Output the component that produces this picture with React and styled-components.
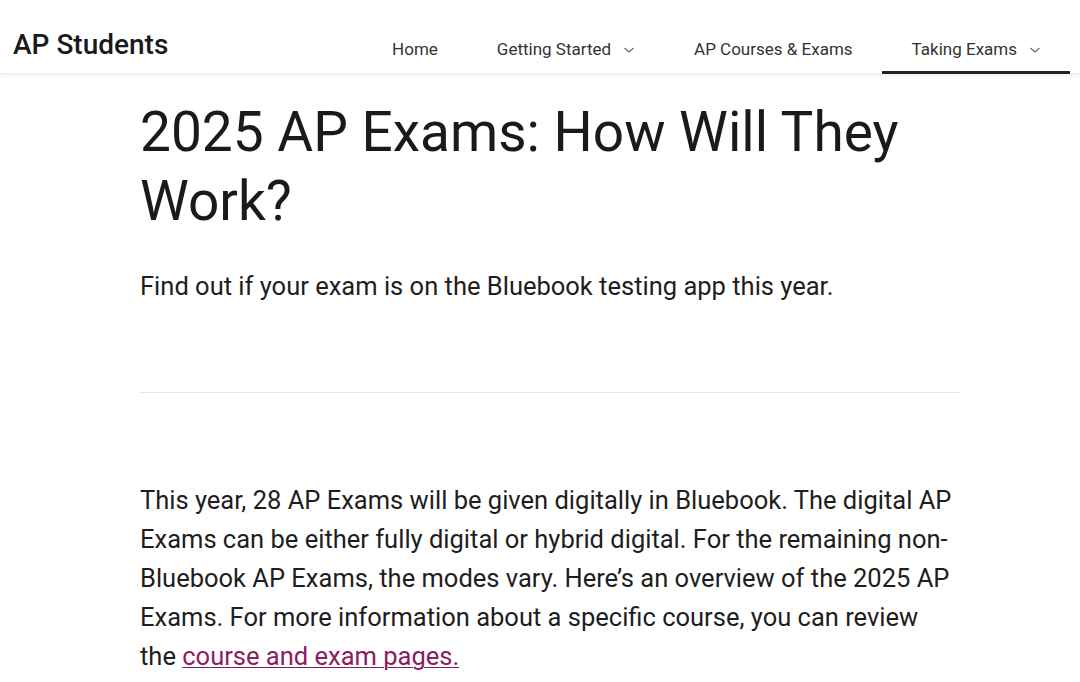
import styled, { createGlobalStyle } from "styled-components";

const GlobalStyle = createGlobalStyle`
  * { box-sizing: border-box; }
  body {
    margin: 0;
    background: #ffffff;
    font-family: Roboto, "Liberation Sans", Arial, sans-serif;
    color: #1e1e1e;
  }
`;

const Chevron = () => (
  <ChevronIcon viewBox="0 0 12 8" aria-hidden="true">
    <path d="M1.5 2l4.5 4 4.5-4" fill="none" stroke="#666" strokeWidth="1.1" />
  </ChevronIcon>
);

const App = () => {
  return (
    <>
      <GlobalStyle />
      <Header>
        <Brand>AP Students</Brand>
        <Nav>
          <NavItem>Home</NavItem>
          <NavItem>
            Getting Started <Chevron />
          </NavItem>
          <NavItem>AP Courses &amp; Exams</NavItem>
          <NavItem active>
            Taking Exams <Chevron />
          </NavItem>
        </Nav>
      </Header>
      <Main>
        <Title>2025 AP Exams: How Will They Work?</Title>
        <Lead>Find out if your exam is on the Bluebook testing app this year.</Lead>
        <Divider />
        <Body>
          This year, 28 AP Exams will be given digitally in Bluebook. The digital AP
          Exams can be either fully digital or hybrid digital. For the remaining non-Bluebook
          AP Exams, the modes vary. Here’s an overview of the 2025 AP Exams. For more
          information about a specific course, you can review the{" "}
          <Link href="#">course and exam pages.</Link>
        </Body>
      </Main>
    </>
  );
};

const Header = styled.header`
  height: 74px;
  display: flex;
  align-items: stretch;
  justify-content: space-between;
  padding: 0 10px 0 13px;
  background: #fff;
  box-shadow: 0 2px 4px rgba(0, 0, 0, 0.06);
  border-bottom: 1px solid #f0f0f0;
`;

const Brand = styled.div`
  font-size: 28px;
  font-weight: 500;
  color: #1a1a1a;
  align-self: center;
  margin-top: 16px;
`;

const Nav = styled.nav`
  display: flex;
  align-items: stretch;
`;

const NavItem = styled.a`
  display: flex;
  align-items: center;
  gap: 12px;
  padding: 26px 29px 0 30px;
  font-size: 17px;
  color: #333;
  border-bottom: 3px solid ${(p) => (p.active ? "#222" : "transparent")};
  margin-bottom: -1px;
  cursor: pointer;
  white-space: nowrap;
`;

const ChevronIcon = styled.svg`
  width: 12px;
  height: 8px;
  margin-top: 2px;
`;

const Main = styled.main`
  padding: 24px 120px 0 140px;
`;

const Title = styled.h1`
  margin: 0;
  font-size: 55px;
  line-height: 69px;
  font-weight: 400;
  color: #1a1a1a;
  max-width: 800px;
`;

const Lead = styled.p`
  margin: 34px 0 0;
  font-size: 25.5px;
  line-height: 32px;
  color: #1e1e1e;
`;

const Divider = styled.hr`
  margin: 90px 0 0;
  border: 0;
  border-top: 1px solid #e6e6e6;
  width: 820px;
`;

const Body = styled.p`
  margin: 88px 0 0;
  width: 820px;
  font-size: 25.5px;
  line-height: 39px;
  color: #1e1e1e;
`;

const Link = styled.a`
  color: #8a1d5c;
  text-decoration: underline;
  text-underline-offset: 2px;
  text-decoration-thickness: 1px;
`;

export default App;
